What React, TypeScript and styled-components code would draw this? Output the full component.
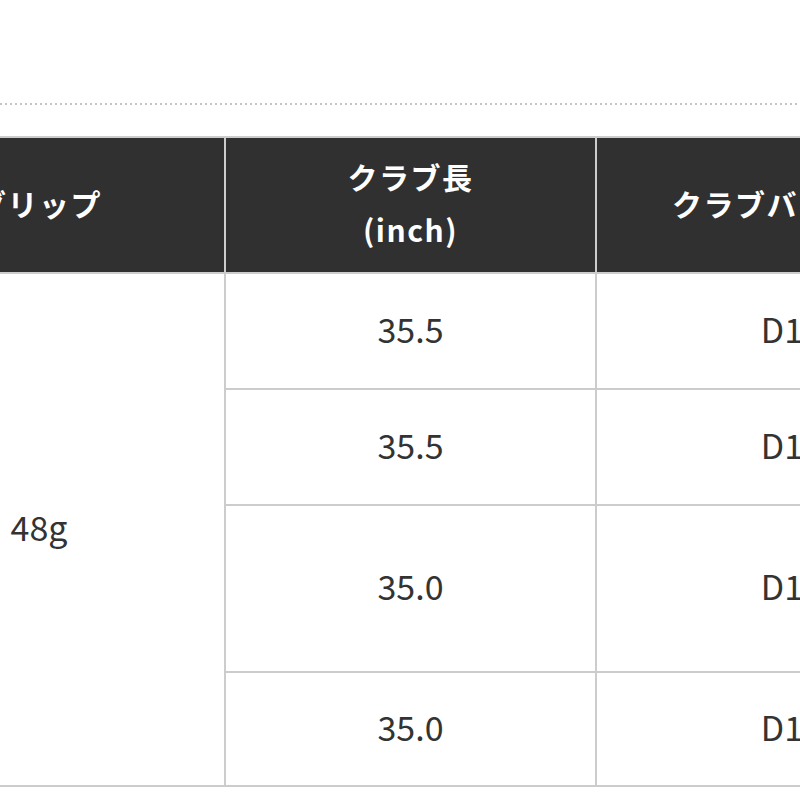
import styled, { createGlobalStyle } from "styled-components";

const GlobalStyle = createGlobalStyle`
  html, body {
    margin: 0;
    padding: 0;
    background: #ffffff;
  }
  body {
    font-family: "Noto Sans CJK JP", "Noto Sans", sans-serif;
  }
`;

const rows = [
  { length: "35.5", balance: "D1", height: 116 },
  { length: "35.5", balance: "D1", height: 116 },
  { length: "35.0", balance: "D1", height: 167 },
  { length: "35.0", balance: "D1", height: 114 },
];

export default function App() {
  return (
    <>
      <GlobalStyle />
      <Page>
        <Divider />
        <SpecTable>
          <colgroup>
            <col style={{ width: 372 }} />
            <col style={{ width: 371 }} />
            <col style={{ width: 372 }} />
          </colgroup>
          <thead>
            <tr>
              <HeadCell>グリップ</HeadCell>
              <HeadCell>
                クラブ長
                <br />
                (inch)
              </HeadCell>
              <HeadCell>クラブバランス</HeadCell>
            </tr>
          </thead>
          <tbody>
            {rows.map((row, i) => (
              <BodyRow key={i} $height={row.height}>
                {i === 0 && <Cell rowSpan={rows.length}>48g</Cell>}
                <Cell>{row.length}</Cell>
                <Cell>{row.balance}</Cell>
              </BodyRow>
            ))}
          </tbody>
        </SpecTable>
      </Page>
    </>
  );
}

const Page = styled.div`
  width: 800px;
  height: 800px;
  overflow: hidden;
  padding-top: 103px;
  box-sizing: border-box;
`;

const Divider = styled.div`
  height: 2px;
  width: 100%;
  background-image: linear-gradient(to right, #c4c4c4 2px, transparent 2px);
  background-size: 5px 2px;
  background-repeat: repeat-x;
  margin-bottom: 31px;
`;

const SpecTable = styled.table`
  border-collapse: collapse;
  table-layout: fixed;
  width: 1115px;
  margin-left: -148px;
`;

const HeadCell = styled.th`
  height: 130px;
  padding: 0 0 4px;
  background: #303030;
  color: #ffffff;
  border: 2px solid #cccccc;
  font-size: 30px;
  font-weight: 700;
  line-height: 53px;
  letter-spacing: 1.5px;
  text-align: center;
  vertical-align: middle;
`;

const BodyRow = styled.tr<{ $height: number }>`
  height: ${(p) => p.$height}px;
`;

const Cell = styled.td`
  padding: 0 0 6px;
  border: 2px solid #cccccc;
  color: #333333;
  font-size: 34px;
  font-weight: 400;
  text-align: center;
  vertical-align: middle;
`;
